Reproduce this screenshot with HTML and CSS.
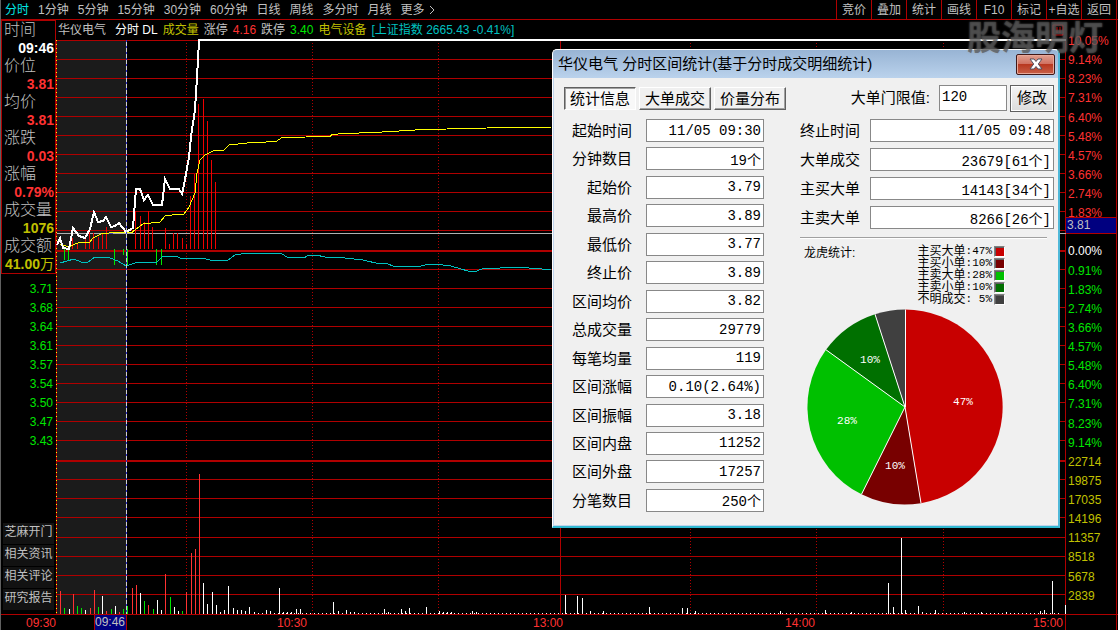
FILE: index.html
```html
<!DOCTYPE html>
<html lang="zh-CN">
<head>
<meta charset="utf-8">
<title>华仪电气 分时</title>
<link rel="stylesheet" href="styles.css">
</head>
<body>
<div class="app">
  <header class="topbar">
    <nav class="periods">
      <button class="period active">分时</button><button class="period">1分钟</button><button class="period">5分钟</button><button class="period">15分钟</button><button class="period">30分钟</button><button class="period">60分钟</button><button class="period">日线</button><button class="period">周线</button><button class="period">多分时</button><button class="period">月线</button><button class="period more">更多<svg class="chevron" viewBox="0 0 6 10"><path d="M1 1L5 5L1 9"/></svg></button>
    </nav>
    <nav class="tools">
      <button class="tool">竞价</button><button class="tool">叠加</button><button class="tool">统计</button><button class="tool">画线</button><button class="tool">F10</button><button class="tool">标记</button><button class="tool">+自选</button><button class="tool">返回</button>
    </nav>
  </header>

  <main class="workspace">
    <aside class="side">
      <dl class="quote">
        <dt>时间</dt><dd class="white">09:46</dd>
        <dt>价位</dt><dd class="red">3.81</dd>
        <dt>均价</dt><dd class="red">3.81</dd>
        <dt>涨跌</dt><dd class="red">0.03</dd>
        <dt>涨幅</dt><dd class="red">0.79%</dd>
        <dt>成交量</dt><dd class="yellow">1076</dd>
        <dt>成交额</dt><dd class="yellow">41.00<span class="unit">万</span></dd>
      </dl>
      <ul class="prices">
        <li>3.71</li><li>3.68</li><li>3.64</li><li>3.61</li><li>3.57</li><li>3.54</li><li>3.50</li><li>3.47</li><li>3.43</li>
      </ul>
      <nav class="links">
        <button class="link">芝麻开门</button><button class="link">相关资讯</button><button class="link">相关评论</button><button class="link">研究报告</button>
      </nav>
    </aside>

    <section class="chart">
      <div class="info">
        <span class="grey name">华仪电气</span><span class="white">分时 DL</span><span class="yellow">成交量</span><span class="grey">涨停</span><span class="red">4.16</span><span class="grey">跌停</span><span class="green">3.40</span><span class="yellow">电气设备</span><span class="cyan">[上证指数 2665.43 -0.41%]</span>
        <svg class="pane-icon" viewBox="0 0 12 12"><path d="M1 1H11V11H1ZM5 3V9M8 3V9"/></svg>
      </div>
      <svg class="plot" viewBox="56 40 1010 574" preserveAspectRatio="none">
        <rect x="57" y="40" width="70" height="574" fill="#1b1b1b"/>
        <g class="grid">
          <path d="M56 40.5H1066M56 59.5H1066M56 78.5H1066M56 97.5H1066M56 116.5H1066M56 135.5H1066M56 154.5H1066M56 173.5H1066M56 192.5H1066M56 211.5H1066M56 230.5H1066M56 269.5H1066M56 288.5H1066M56 307.5H1066M56 326.5H1066M56 345.5H1066M56 364.5H1066M56 383.5H1066M56 402.5H1066M56 421.5H1066M56 440.5H1066M56 479.5H1066M56 498.5H1066M56 517.5H1066M56 537.5H1066M56 556.5H1066M56 575.5H1066M56 594.5H1066"/>
          <path class="thick" d="M56 251H1066M56 461H1066"/>
          <path d="M56.5 40V614M560.5 40V614M1065.5 40V614"/>
          <path class="dots" d="M186.5 43V614M312.5 43V614M438.5 43V614M690.5 43V614M816.5 43V614M943.5 43V614"/>
        </g>
        <path class="start-line" d="M56.5 40V614"/>
        <path class="line level" d="M57 233.5H1066"/>
        <path class="line level-mark" d="M104 233.5H113"/>
        <path class="bars red-bar" d="M72.5 238V249M77.5 244V249M85.5 238V249M89.5 227V249M93.5 233V249M98.5 237V249M102.5 233V249M106.5 227V249M135.5 211V249M140.5 216V249M144.5 222V249M148.5 211V249M152.5 227V249M165.5 228V249M169.5 244V249M173.5 233V249M177.5 233V249M182.5 238V249M186.5 244V249M190.5 196V249M194.5 174V249M198.5 104V249M203.5 99V249M207.5 121V249M211.5 160V249M215.5 182V249"/>
        <path class="bars green-bar" d="M64.5 249V260M68.5 249V260M114.5 249V265M123.5 249V255M127.5 249V266M156.5 249V265M161.5 249V265"/>
        <polyline class="line avg" points="60,244 69,247 75,244 81,242 90,242 93,238 101,234 113,232.5 132,232.5 136,229 143,224 160,222 165,216 172,215 184,214 189,207 195,193 197,173 200,160 205,155 213,151 224,150 229,145 247,143 276,141.5 282,137.5 330,136.5 332,134.5 344,133.5 374,132.5 407,130.5 424,129.5 470,128.5 504,127.5 551,127.5"/>
        <polyline class="line index" points="60,263 67,261 74,259 81,262 88,262 95,257 110,258 118,261 126,266 135,263 157,262 163,256 176,256 182,259 203,258 213,261 228,260 235,255 247,253 270,253 282,254 287,257 304,258 307,256 316,255 325,257 341,257.5 363,260 380,264 385,263 396,267 409,266 416,267 430,264 449,265.5 468,271 477,271 483,268.5 497,269 503,267 523,267 532,268.5 551,269.5"/>
        <polyline class="line price" points="57,245 60,238 63,248 69,249 73,228 79,236 85,238 90,229 94,212 98,222 103,221 106,217 111,227 115,226 119,223 126,232 133,228 136,189 140,189 144,200 148,195 153,205 162,205 165,179 170,189 179,189 182,194 184,185 189,157 191,137 193,123 195,110 198,60 199,40 1066,40"/>
        <path class="cursor-base" d="M126.5 40V614"/>
        <path class="cursor-line" d="M126.5 40V614"/>
        <path class="base" d="M258 613.5H1060"/>
        <path class="bars vol-white" d="M69.5 609V614M85.5 610V614M102.5 596V614M115.5 606V614M140.5 593V614M157.5 600V614M161.5 610V614M174.5 607V614M178.5 611V614M203.5 583V614M207.5 604V614M212.5 592V614M216.5 605V614M220.5 612V614M224.5 610V614M228.5 586V614M233.5 608V614M237.5 610V614M241.5 610V614M245.5 611V614M249.5 607V614M254.5 612V614M266.5 610V614M270.5 611V614M279.5 588V614M283.5 612V614M287.5 612V614M291.5 612V614M296.5 609V614M300.5 609V614M333.5 602V614M338.5 611V614M346.5 610V614M350.5 612V614M354.5 612V614M384.5 609V614M388.5 612V614M401.5 609V614M405.5 611V614M409.5 608V614M426.5 607V614M439.5 611V614M443.5 612V614M447.5 612V614M451.5 612V614M472.5 611V614M476.5 612V614M565.5 595V614M577.5 596V614M582.5 598V614M590.5 611V614M603.5 611V614M649.5 607V614M682.5 608V614M687.5 608V614M695.5 611V614M780.5 611V614M825.5 610V614M851.5 612V614M888.5 583V614M893.5 607V614M901.5 538V614M905.5 610V614M918.5 606V614M922.5 612V614M935.5 610V614M964.5 612V614M981.5 612V614M1006.5 612V614M1040.5 611V614M1044.5 610V614M1052.5 581V614M1065.5 605V614"/>
        <path class="bars vol-green" d="M64.5 608V614M77.5 606V614M81.5 608V614M98.5 607V614M111.5 609V614M123.5 609V614M127.5 606V614M144.5 601V614M153.5 609V614M170.5 597V614M182.5 611V614"/>
        <path class="bars vol-red" d="M60.5 591V614M73.5 594V614M90.5 608V614M94.5 590V614M106.5 611V614M119.5 612V614M132.5 588V614M136.5 585V614M148.5 605V614M165.5 574V614M186.5 592V614M191.5 553V614M195.5 549V614M199.5 474V614"/>
      </svg>
    </section>

    <aside class="scale">
      <ul class="marks">
        <li class="red">10.05%</li><li class="red">9.14%</li><li class="red">8.23%</li><li class="red">7.31%</li><li class="red">6.40%</li><li class="red">5.48%</li><li class="red">4.57%</li><li class="red">3.66%</li><li class="red">2.74%</li><li class="red">1.83%</li><li class="current"><span class="current-value">3.81</span></li><li class="white">0.00%</li><li class="green">0.91%</li><li class="green">1.83%</li><li class="green">2.74%</li><li class="green">3.66%</li><li class="green">4.57%</li><li class="green">5.48%</li><li class="green">6.40%</li><li class="green">7.31%</li><li class="green">8.23%</li><li class="green">9.14%</li><li class="yellow">22714</li><li class="yellow">19875</li><li class="yellow">17035</li><li class="yellow">14196</li><li class="yellow">11357</li><li class="yellow">8518</li><li class="yellow">5678</li><li class="yellow">2839</li>
      </ul>
    </aside>
  </main>

  <footer class="times">
    <span class="first">09:30</span><span class="picked">09:46</span><span class="t1030">10:30</span><span class="t1300">13:00</span><span class="t1400">14:00</span><span class="t1500">15:00</span><span class="corner"></span>
  </footer>

  <section class="dialog" role="dialog" aria-labelledby="dialog-title">
    <header class="titlebar">
      <h1 class="title" id="dialog-title">华仪电气 分时区间统计(基于分时成交明细统计)</h1>
      <button class="close" aria-label="关闭"><svg class="close-icon" viewBox="0 0 14 12"><path d="M1 1H5L7 3.500L9 1H13L9.300 6L13 11H9L7 8.500L5 11H1L4.700 6Z"/></svg></button>
    </header>
    <div class="dialog-body">
      <div class="toolbar">
        <button class="tab selected">统计信息</button><button class="tab">大单成交</button><button class="tab">价量分布</button>
        <label class="limit-label" for="limit">大单门限值:</label><input class="limit" id="limit" value="120"><button class="apply">修改</button>
      </div>
      <div class="columns">
        <div class="fields">
          <label for="f1">起始时间</label><input id="f1" readonly value="11/05 09:30">
          <label for="f2">分钟数目</label><input id="f2" readonly value="19个">
          <label for="f3">起始价</label><input id="f3" readonly value="3.79">
          <label for="f4">最高价</label><input id="f4" readonly value="3.89">
          <label for="f5">最低价</label><input id="f5" readonly value="3.77">
          <label for="f6">终止价</label><input id="f6" readonly value="3.89">
          <label for="f7">区间均价</label><input id="f7" readonly value="3.82">
          <label for="f8">总成交量</label><input id="f8" readonly value="29779">
          <label for="f9">每笔均量</label><input id="f9" readonly value="119">
          <label for="f10">区间涨幅</label><input id="f10" readonly value="0.10(2.64%)">
          <label for="f11">区间振幅</label><input id="f11" readonly value="3.18">
          <label for="f12">区间内盘</label><input id="f12" readonly value="11252">
          <label for="f13">区间外盘</label><input id="f13" readonly value="17257">
          <label for="f14">分笔数目</label><input id="f14" readonly value="250个">
        </div>
        <div class="summary">
          <div class="fields totals">
            <label for="g1">终止时间</label><input id="g1" readonly value="11/05 09:48">
            <label for="g2">大单成交</label><input id="g2" readonly value="23679[61个]">
            <label for="g3">主买大单</label><input id="g3" readonly value="14143[34个]">
            <label for="g4">主卖大单</label><input id="g4" readonly value="8266[26个]">
          </div>
          <div class="stats">
            <h2 class="stats-title">龙虎统计:</h2>
            <ul class="legend">
              <li>主买大单<span class="share">:47%</span><i class="swatch buy-big"></i></li>
              <li>主买小单<span class="share">:10%</span><i class="swatch buy-small"></i></li>
              <li>主卖大单<span class="share">:28%</span><i class="swatch sell-big"></i></li>
              <li>主卖小单<span class="share">:10%</span><i class="swatch sell-small"></i></li>
              <li>不明成交<span class="share">: 5%</span><i class="swatch unknown"></i></li>
            </ul>
          </div>
          <svg class="pie" viewBox="-98 -98 196 196">
            <path fill="#c80000" d="M0 0L0 -97.500A97.500 97.500 0 0 1 16 96.200Z"/>
            <path fill="#780000" d="M0 0L16 96.200A97.500 97.500 0 0 1 -43.500 87.300Z"/>
            <path fill="#00c000" d="M0 0L-43.500 87.300A97.500 97.500 0 0 1 -79 -57.200Z"/>
            <path fill="#007000" d="M0 0L-79 -57.200A97.500 97.500 0 0 1 -30 -92.800Z"/>
            <path fill="#404040" d="M0 0L-30 -92.800A97.500 97.500 0 0 1 0 -97.500Z"/>
            <path class="spokes" d="M.5 0V-97.500M0 0L16 96.200M0 0L-43.500 87.300M0 0L-79 -57.200M0 0L-30 -92.800"/>
            <text x="58" y="-2">47%</text><text x="-10" y="62">10%</text><text x="-58" y="17">28%</text><text x="-35" y="-44">10%</text>
          </svg>
        </div>
      </div>
    </div>
  </section>
  <div class="watermark">股海明灯</div>
</div>
</body>
</html>
```
FILE: styles.css
```css
* { box-sizing: border-box; }
body {
  margin: 0;
  background: #000;
  color: #c0c0c0;
  font: 12px/18px "Liberation Sans", "Noto Sans CJK SC", sans-serif;
}
button, input { font: inherit; color: inherit; margin: 0; padding: 0; border: 0; background: none; }
ul, dl, dd, h1, h2 { margin: 0; padding: 0; list-style: none; font-size: inherit; font-weight: normal; }

.app {
  position: relative;
  display: flex;
  flex-direction: column;
  min-height: 100vh;
  border-left: 1px solid #606060;
}
.white { color: #fff; }
.grey { color: #c0c0c0; }
.red { color: #ff3232; }
.green { color: #00e600; }
.yellow { color: #c0c000; }
.cyan { color: #00c0c0; }

/* top bar */
.topbar {
  display: flex;
  justify-content: space-between;
  height: 20px;
  border-bottom: 1px solid #b00000;
}
.periods { display: flex; gap: 9px; padding-left: 4px; white-space: nowrap; }
.period.active { color: #00e6e6; }
.period.more { display: flex; align-items: center; gap: 4px; }
.chevron { width: 6px; height: 10px; fill: none; stroke: #c0c0c0; }
.tools { display: flex; border-right: 1px solid #b00000; margin-right: 1px; }
.tool { width: 35px; border-left: 1px solid #b00000; white-space: nowrap; }

/* main area */
.workspace { flex: 1; display: grid; grid-template-columns: 55px 1fr 52px; }
.side { display: flex; flex-direction: column; }
.quote { border: 1px solid #b00000; font-size: 16px; padding: 0 1px 0 2px; }
.quote dt { font-weight: 300; }
.quote dd { font-size: 14px; font-weight: bold; text-align: right; }
.unit { font-weight: normal; }
.prices { margin-top: 6px; padding-right: 3px; color: #00e600; text-align: right; line-height: 19px; }
.links { display: grid; gap: 1px; margin: auto 2px 4px; }
.link { height: 21px; padding-bottom: 2px; background: #121212; white-space: nowrap; line-height: 17px; }

.chart { display: flex; flex-direction: column; }
.info { display: flex; align-items: center; gap: 5px; height: 20px; padding: 0 2px; white-space: nowrap; }
.name { margin-right: 4px; }
.pane-icon { width: 12px; height: 12px; margin-left: auto; fill: none; stroke: #c80000; }
.plot { flex: 1; display: block; width: 100%; height: 100%; min-height: 0; overflow: visible; fill: none; shape-rendering: crispEdges; }
.grid { stroke: #b00000; }
.thick { stroke-width: 2; }
.dots { stroke-dasharray: 1 2; }
.start-line { stroke: #ffff00; stroke-dasharray: 1 3; }
.level { stroke: #b0b0b0; }
.level-mark { stroke: #4040c0; }
.red-bar { stroke: #f00000; }
.green-bar, .vol-green { stroke: #00e600; }
.vol-red { stroke: #ff3232; }
.vol-white { stroke: #fff; }
.avg { stroke: #ffff00; }
.index { stroke: #00c0c0; }
.price { stroke: #fff; stroke-width: 2; }
.cursor-base { stroke: #d0d0d0; }
.cursor-line { stroke: #3030d0; stroke-dasharray: 2 4; }
.base { stroke: #fff; stroke-dasharray: 1 3; }

.scale { padding-top: 12px; border-right: 1px solid #b00000; margin-right: 1px; }
.marks { display: flex; flex-direction: column; justify-content: space-between; height: 100%; padding-bottom: 9px; }
.marks li { height: 18px; padding-left: 2px; }
.marks .current { padding: 0; }
.current-value { display: block; height: 17px; margin-top: -6px; padding-left: 1px; line-height: 15px; color: #c0c0c0; background: #000080; border: 1px solid #b00000; border-width: 1px 0; }

/* time axis */
.times {
  display: grid;
  grid-template-columns: 55px 38fr 33fr 150fr 256fr 252fr 248fr 33fr 52px;
  height: 16px;
  border-top: 1px solid #b00000;
  color: #ff3232;
  line-height: 16px;
}
.first { text-align: right; }
.picked { grid-column: 3; background: #000080; color: #c0c0c0; border: 1px solid #b00000; border-width: 0 1px; line-height: 14px; }
.t1030 { grid-column: 5; }
.t1300 { grid-column: 6; }
.t1400 { grid-column: 7; }
.t1500 { grid-column: 8; border-right: 1px solid #b00000; }
.corner { grid-column: 9; border-right: 1px solid #b00000; margin-right: 1px; }

/* statistics window, floats over the chart */
.dialog {
  position: absolute;
  top: 49px;
  right: 58px;
  width: 508px;
  color: #000;
  background: #f0f0f0;
  border: 1px solid #fff;
  border-right: 2px solid #50b8d8;
  border-bottom: 2px solid #30b8d0;
  border-radius: 5px 5px 0 0;
  font-size: 15px;
}
.titlebar {
  display: flex;
  justify-content: space-between;
  align-items: center;
  height: 28px;
  padding: 0 3px 0 5px;
  background: linear-gradient(#98b4d4, #bad2ec);
  border-radius: 4px 4px 0 0;
  white-space: nowrap;
}
.close {
  display: grid;
  place-items: center;
  width: 39px;
  height: 21px;
  border: 1px solid #401818;
  border-radius: 2px;
  box-shadow: inset 0 0 0 1px #e8a898;
  background: linear-gradient(#e0a090, #d07060 48%, #b83820 50%, #c86048);
}
.close-icon { width: 14px; height: 12px; fill: #fff; stroke: #505060; stroke-width: 1; overflow: visible; }
.dialog-body { padding: 6px 4px 13px 10px; border: 1px solid #c0d4ec; border-top: 0; border-right: 0; }
.toolbar { display: flex; align-items: center; gap: 3px; height: 28px; }
.tab {
  width: 72px;
  height: 23px;
  border: 1px solid;
  border-color: #fff #606060 #606060 #fff;
  box-shadow: inset -1px -1px 0 #a0a0a0;
  line-height: 21px;
  white-space: nowrap;
}
.tab.selected { border-color: #606060 #fff #fff #606060; box-shadow: inset 1px 1px 0 #a0a0a0; background: #f8f8f8; }
.limit-label { margin-left: auto; padding-right: 6px; }
.limit, .fields input { border: 1px solid #888; background: #fff; font: 14px "Liberation Mono", "Noto Sans CJK SC", monospace; }
.limit { width: 68px; height: 26px; padding: 0 2px 2px; }
.apply { width: 44px; height: 27px; border: 1px solid #606060; box-shadow: inset 0 0 0 1px #fff; background: linear-gradient(#f4f4f4, #dcdcdc); }
.columns { display: flex; justify-content: space-between; padding-top: 7px; }
.fields {
  display: grid;
  grid-template-columns: 68px 118px;
  column-gap: 14px;
  align-content: space-between;
  align-items: center;
  height: 393px;
  line-height: 23px;
}
.fields label { text-align: right; }
.fields input { width: 100%; height: 23px; padding: 0 2px; text-align: right; }
.summary { width: 254px; }
.totals { grid-template-columns: 60px 184px; column-gap: 10px; height: 110px; }
.stats {
  display: flex;
  justify-content: space-between;
  margin-right: 7px;
  margin-top: 8px;
  padding: 7px 42px 0 4px;
  border-top: 1px solid #a0a0a0;
  box-shadow: inset 0 1px 0 #fff;
  font-size: 12px;
}
.stats-title { line-height: 16px; }
.legend li { display: flex; justify-content: flex-end; align-items: center; height: 12px; line-height: 12px; white-space: pre; }
.share { font: 11px/12px "Liberation Mono", monospace; }
.swatch { width: 11px; height: 11px; margin-left: 2px; border: 1px solid; border-color: #808080 #fff #fff #808080; box-shadow: inset 1px 1px 0 #606060; }
.buy-big { background: #c80000; }
.buy-small { background: #780000; }
.sell-big { background: #00c000; }
.sell-small { background: #007000; }
.unknown { background: #404040; }
.pie { display: block; width: 196px; height: 196px; margin: 4px 0 0 7px; }
.spokes { fill: none; stroke: #fff; }
.pie text { fill: #fff; font: 11px "Liberation Mono", monospace; text-anchor: middle; }

.watermark {
  position: absolute;
  top: 12px;
  right: 15px;
  color: rgba(70, 70, 70, 0.600);
  font: bold 34px/48px "Noto Sans CJK SC", sans-serif;
  text-shadow: 0 0 2px rgba(150, 150, 150, 0.600);
  pointer-events: none;
}
```
